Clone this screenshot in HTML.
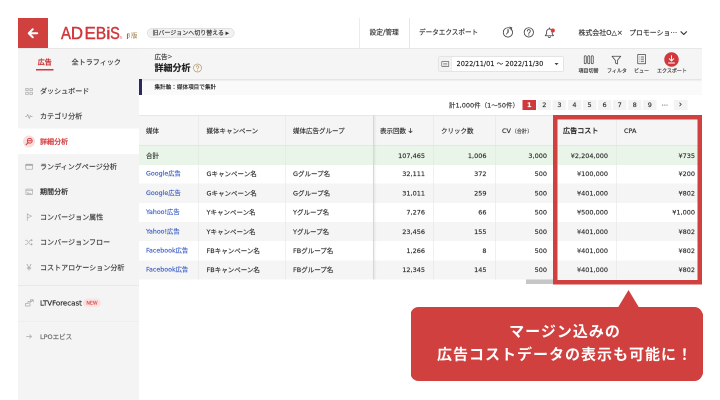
<!DOCTYPE html>
<html lang="ja">
<head>
<meta charset="utf-8">
<title>AD EBiS 詳細分析</title>
<style>
html,body{margin:0;padding:0;background:#fff;}
body{width:720px;height:400px;overflow:hidden;position:relative;}
#w{position:absolute;left:0;top:0;width:1440px;height:800px;transform:scale(.5);transform-origin:0 0;
  font-family:"DejaVu Sans","Noto Sans CJK JP",sans-serif;color:#333;font-size:13px;line-height:1;overflow:hidden;will-change:transform;-webkit-text-stroke:.3px;}
#w *{box-sizing:border-box;}
.abs{position:absolute;}
.t{position:absolute;white-space:nowrap;transform:translateY(-50%);}
/* header */
#hdr{left:36px;top:36px;width:1368px;height:61.5px;background:#fff;border-bottom:2px solid #dadada;}
#back{left:36px;top:36px;width:60px;height:60px;background:#d0403f;}
#pill{left:294px;top:56px;width:175px;height:20px;border:1px solid #cfcfcf;border-radius:10px;background:#f1f1f1;font-size:12px;color:#333;text-align:center;line-height:18px;white-space:nowrap;}
/* sidebar */
#side{left:36px;top:97px;width:242px;height:703px;background:#f4f4f4;}
.si{position:absolute;left:80px;font-size:14.1px;color:#3c3c3c;white-space:nowrap;transform:translateY(-50%);}
/* sub header */
#sub{left:278px;top:97px;width:1126px;height:61px;background:#f5f5f5;box-shadow:0 2px 4px rgba(0,0,0,.12);clip-path:inset(0 0 -12px 0);}
#agg{left:278px;top:158px;width:1126px;height:32px;background:#fafafa;}
#aggbar{left:278px;top:158px;width:6px;height:32px;background:#2b2a60;}
/* table */
.row{position:absolute;left:278px;width:1126px;}
.vb{position:absolute;top:231px;height:328px;width:1px;background:#e2e2e2;}
.c{position:absolute;white-space:nowrap;transform:translateY(-50%);font-size:13px;color:#2e2e2e;}
.r{text-align:right;}
.lnk{color:#3a5dc4;font-size:12.6px;}
.pg{position:absolute;top:200px;width:27px;height:20px;background:#f3f3f3;font-size:13px;text-align:center;line-height:20px;color:#333;margin-left:-.5px;}
</style>
</head>
<body>
<div id="w">
  <!-- header -->
  <div id="hdr" class="abs"></div>
  <div id="back" class="abs">
    <svg width="60" height="59" viewBox="0 0 60 59"><path d="M38.500 30.500H22M29.500 22.500L21.500 30.500L29.500 38.500" fill="none" stroke="#fff" stroke-width="4" stroke-linecap="round" stroke-linejoin="round"/></svg>
  </div>
  <svg class="abs" style="left:110px;top:40px" width="180" height="50" viewBox="55 20 90 25">
    <g font-family="Liberation Sans, sans-serif" font-size="17.4" fill="#d0383c" stroke="#d0383c" stroke-width=".45">
      <text transform="translate(61.05,38.8) scale(.86,1)">A</text>
      <text transform="translate(70.87,38.8) scale(.966,1)">D</text>
      <text transform="translate(84.5,38.8) scale(.972,1)">E</text>
      <text transform="translate(95.74,38.8) scale(.9,1)">B</text>
      <text transform="translate(106.08,38.8) scale(1.15,.965)">i</text>
      <text transform="translate(110.1,38.8) scale(.835,1)">S</text>
      <text x="119.6" y="38.8" font-size="3.6" stroke="none">®</text>
    </g>
  </svg>
  <div class="t" style="left:253px;top:70.5px;font-size:12.6px;-webkit-text-stroke:0;color:#94733f;font-family:'Liberation Sans','Noto Sans CJK JP',sans-serif;"><span style="margin-right:2px">β</span>版</div>
  <div id="pill" class="abs">旧バージョンへ切り替える<span style="font-size:9.5px;margin-left:3px;position:relative;top:-1px;-webkit-text-stroke:0">▶</span></div>

  <div class="t" style="left:739px;top:65px;font-size:13.5px;color:#333;">設定/管理</div>
  <div class="abs" style="left:718px;top:36px;width:1.5px;height:60px;background:#ececec;"></div>
  <div class="abs" style="left:818px;top:36px;width:1.5px;height:60px;background:#e6e6e6;"></div>
  <div class="t" style="left:838px;top:65px;font-size:13.2px;color:#333;">データエクスポート</div>
  <!-- header icons -->
  <svg class="abs" style="left:1000px;top:50px" width="120" height="30" viewBox="0 0 120 30">
    <g fill="none" stroke="#444" stroke-width="1.700" stroke-linecap="round" stroke-linejoin="round">
      <circle cx="15.800" cy="14.800" r="9.300"/><path d="M15.800 9V14.800L12.800 18.200"/><path d="M19.500 4.200L23.600 5.600L22 9.800"/>
      <circle cx="57.600" cy="14.800" r="9.300"/>
      <path d="M54.600 12.200a3 3 0 1 1 4.600 2.500c-1.100.700-1.600 1.300-1.600 2.500"/>
      <path d="M90.500 21.500L93.200 17.500V13.500a5.600 5.600 0 0 1 11.200 0V17.500L107.100 21.500Z"/>
      <path d="M98.800 7.700V5.600"/>
      <path d="M96.500 23.500a2.400 2.400 0 0 0 4.600 0"/>
    </g>
    <circle cx="57.600" cy="20" r="1.200" fill="#444"/>
    <circle cx="105.600" cy="11" r="4.100" fill="#e03a3a"/>
  </svg>
  <div class="t" style="left:1157px;top:65px;font-size:13.8px;color:#333;">株式会社O△×<span style="display:inline-block;width:13px"></span>プロモーショ<span style="font-family:'Noto Sans CJK JP',sans-serif">…</span></div>
  <svg class="abs" style="left:1358px;top:59px" width="18" height="14" viewBox="0 0 18 14"><path d="M4 4.500L9.500 10L15 4.500" fill="none" stroke="#333" stroke-width="2.300" stroke-linecap="round" stroke-linejoin="round"/></svg>

  <!-- sidebar -->
  <div id="side" class="abs"></div>
  <div class="t" style="left:75.5px;top:124px;font-size:14px;color:#d0383c;font-weight:bold;">広告</div>
  <div class="abs" style="left:72px;top:137.5px;width:34.5px;height:3px;background:#d0383c;"></div>
  <div class="t" style="left:143px;top:124px;font-size:14.2px;color:#3a3a3a;">全トラフィック</div>

  <div class="abs" style="left:36px;top:257px;width:242px;height:51px;background:#fff;"></div>
  <div class="si" style="top:182px;">ダッシュボード</div>
  <div class="si" style="top:232px;">カテゴリ分析</div>
  <div class="si" style="top:283px;color:#d0383c;font-weight:500;">詳細分析</div>
  <div class="si" style="top:333px;">ランディングページ分析</div>
  <div class="si" style="top:383px;font-weight:500;color:#333;">期間分析</div>
  <div class="si" style="top:434px;">コンバージョン属性</div>
  <div class="si" style="top:484px;">コンバージョンフロー</div>
  <div class="si" style="top:535px;">コストアロケーション分析</div>
  <div class="abs" style="left:36px;top:570px;width:242px;height:1px;background:#dedede;"></div>
  <div class="si" style="top:606px;color:#222;font-weight:500;">LTVForecast</div>
  <div class="abs" style="left:166px;top:597px;width:36px;height:17px;border-radius:9px;background:#fbe2e2;color:#d84a4a;font-size:9.5px;text-align:center;line-height:17px;">NEW</div>
  <div class="abs" style="left:36px;top:642px;width:242px;height:1px;background:#e8e8e8;"></div>
  <div class="si" style="top:673px;font-size:13px;color:#666;">LPOエビス</div>
  <!-- sidebar icons -->
  <svg class="abs" style="left:36px;top:160px" width="44" height="540" viewBox="0 0 44 540">
    <g fill="none" stroke="#aaa" stroke-width="1.500" stroke-linecap="round" stroke-linejoin="round">
      <!-- dashboard 4 squares, center y=22 -->
      <rect x="15.500" y="17" width="5" height="4.300"/><rect x="23.800" y="17" width="5" height="4.300"/>
      <rect x="15.500" y="24.500" width="5" height="4.300"/><rect x="23.800" y="24.500" width="5" height="4.300"/>
      <!-- category pulse, center y=72 -->
      <path d="M15 73h2.500l2-4.500 3 8.500 2.200-6 1.300 2h2.500"/>
      <!-- landing page, center y=173 -->
      <rect x="15.500" y="168.500" width="13.500" height="10" rx=".8"/><path d="M15.500 170.300h13.500" stroke-width="2.400"/>
      <!-- period calendar, center y=223 -->
      <g transform="translate(22.300 223.500) scale(.88) translate(-22.500 -223)"><rect x="15" y="217" width="15" height="12" rx="1"/><path d="M15 220.500h15M18 224h3M18 226.500h9"/></g>
      <!-- flag, center y=274 -->
      <g transform="translate(22 274) scale(.88) translate(-22 -274)"><path d="M18 266v16M18 267.500l10 4.500-10 4.500"/></g>
      <!-- shuffle, center y=324 -->
      <g transform="translate(21.500 324.500) scale(.86) translate(-22.200 -324.300)"><path d="M14 319.500h3.500l8 9.500H30M14 329h3.500l2.500-3M23.500 322.500l2-3H30M28 317.500l2.500 2-2.500 2M28 327l2.500 2-2.500 2"/></g>
      <!-- ltv, center y=446 -->
      <path d="M15 452v-5h5v-4h5v-3.500h5M15 452h9v-4"/><path d="M22 447l8-6.500M26 440h4.500v4"/>
      <!-- arrow, center y=513 -->
      <path d="M17 513h10M23.500 509.500l3.500 3.500-3.500 3.500"/>
    </g>
    <!-- yen -->
    <text x="22" y="381" font-family="Liberation Sans, sans-serif" font-size="18" fill="#aaa" text-anchor="middle">¥</text>
    <!-- active icon -->
    <circle cx="22" cy="123" r="12" fill="#f9dede"/>
    <g fill="none" stroke="#d0383c" stroke-width="1.900" stroke-linecap="round">
      <circle cx="23.500" cy="121.500" r="4.800"/><path d="M20 125.500l-4 4M21 121.500h5"/>
    </g>
  </svg>

  <!-- sub header -->
  <div id="agg" class="abs"></div>
  <div id="aggbar" class="abs"></div>
  <div class="t" style="left:309px;top:175px;font-size:11.2px;color:#222;">集計軸：媒体項目で集計</div>
  <div id="sub" class="abs"></div>
  <div class="t" style="left:309px;top:113px;font-size:13px;color:#333;">広告<span style="font-size:15.5px;font-family:'Liberation Sans',sans-serif;-webkit-text-stroke:0">&gt;</span></div>
  <div class="t" style="left:309px;top:136px;font-size:18px;font-weight:bold;color:#222;">詳細分析</div>
  <svg class="abs" style="left:385px;top:126px" width="20" height="20" viewBox="0 0 20 20">
    <circle cx="10" cy="10" r="8" fill="none" stroke="#b8996a" stroke-width="1.400"/>
    <path d="M7.600 8a2.500 2.500 0 1 1 3.700 2.200c-.9.500-1.300 1-1.300 1.900" fill="none" stroke="#b8996a" stroke-width="1.400" stroke-linecap="round"/>
    <circle cx="10" cy="14.400" r=".9" fill="#b8996a"/>
  </svg>
  <!-- date -->
  <div class="abs" style="left:877px;top:113px;width:250px;height:30px;background:#fff;border:1px solid #d4d4d4;border-radius:2px;"></div>
  <div class="abs" style="left:878px;top:114px;width:25px;height:28px;background:#f3f3f3;border-right:1px solid #dcdcdc;"></div>
  <svg class="abs" style="left:882px;top:121px" width="18" height="14" viewBox="0 0 18 14"><rect x="1.500" y="1.700" width="14" height="10.600" rx="1.500" fill="none" stroke="#666" stroke-width="1.400"/><path d="M4.500 6h8M4.500 8.800h8" stroke="#999" stroke-width="1.600"/></svg>
  <div class="t" style="left:913px;top:128px;font-size:13.2px;color:#222;">2022/11/01 ～ 2022/11/30</div>
  <svg class="abs" style="left:1109px;top:126px" width="8" height="5" viewBox="0 0 8 5"><path d="M0 0h8L4 4.500z" fill="#444"/></svg>
  <!-- tool icons -->
  <svg class="abs" style="left:1150px;top:104px" width="240" height="30" viewBox="0 0 240 30">
    <g fill="none" stroke="#444" stroke-width="1.500" stroke-linejoin="round">
      <rect x="18.500" y="7.500" width="4" height="16" rx="2"/><rect x="25.500" y="7.500" width="4" height="16" rx="2"/><rect x="32.500" y="7.500" width="4" height="16" rx="2"/>
      <path d="M74 8.500h17.500l-6.700 8.200v7.300l-4.100-2.200v-5.100z"/>
      <rect x="125.500" y="5" width="15.500" height="18.500" rx=".5"/><path d="M128.500 10h1M131.500 10h6.500M128.500 14.300h1M131.500 14.300h6.500M128.500 18.600h1M131.500 18.600h6.500"/>
    </g>
    <circle cx="193" cy="15" r="14.500" fill="#d0383c"/>
    <path d="M193 7.500v10M188.500 13.500l4.500 4.500 4.500-4.500M187 22h12" fill="none" stroke="#fff" stroke-width="2" stroke-linecap="round" stroke-linejoin="round"/>
  </svg>
  <div class="t" style="left:1157px;top:142px;font-size:10px;color:#333;">項目切替</div>
  <div class="t" style="left:1214px;top:142px;font-size:10px;color:#333;">フィルタ</div>
  <div class="t" style="left:1268px;top:142px;font-size:10px;color:#333;">ビュー</div>
  <div class="t" style="left:1314px;top:142px;font-size:10px;color:#333;">エクスポート</div>

  <!-- pagination -->
  <div class="t" style="left:898px;top:210px;font-size:13px;color:#333;">計1,000件（1～50件）</div>
  <div class="pg" style="left:1045.5px;background:#d0383c;color:#fff;font-weight:bold;">1</div>
  <div class="pg" style="left:1075.7px;">2</div>
  <div class="pg" style="left:1105.8px;">3</div>
  <div class="pg" style="left:1136.0px;">4</div>
  <div class="pg" style="left:1166.1px;">5</div>
  <div class="pg" style="left:1196.2px;">6</div>
  <div class="pg" style="left:1226.4px;">7</div>
  <div class="pg" style="left:1256.5px;">8</div>
  <div class="pg" style="left:1286.7px;">9</div>
  <div class="pg" style="left:1316.8px;background:none;font-family:'Noto Sans CJK JP',sans-serif">…</div>
  <div class="pg" style="left:1348.0px;font-size:17px;line-height:17px;">›</div>

  <!-- table -->
  <div class="row" style="top:229.5px;height:61.5px;background:#f5f5f5;border-top:1px solid #dcdcdc;border-bottom:1px solid #dcdcdc;"></div>
  <div class="row" style="top:291px;height:38.5px;background:#e8f5e8;"></div>
  <div class="row" style="top:329.5px;height:37.8px;background:#fff;"></div>
  <div class="row" style="top:367.3px;height:38.3px;background:#f5f5f5;"></div>
  <div class="row" style="top:405.6px;height:38.4px;background:#fff;"></div>
  <div class="row" style="top:444px;height:38.3px;background:#f5f5f5;"></div>
  <div class="row" style="top:482.3px;height:38.3px;background:#fff;"></div>
  <div class="row" style="top:520.6px;height:38.4px;background:#f5f5f5;"></div>
  <div class="vb" style="left:397px;"></div>
  <div class="vb" style="left:571px;"></div>
  <div class="vb" style="left:746px;width:2px;background:#d8d8d8;box-shadow:2px 0 3px rgba(0,0,0,.10);"></div>
  <div class="vb" style="left:866px;"></div>
  <div class="vb" style="left:990px;"></div>
  <div class="vb" style="left:1232px;"></div>

  <!-- header cells -->
  <div class="c" style="left:292px;top:261px;">媒体</div>
  <div class="c" style="left:413px;top:261px;">媒体キャンペーン</div>
  <div class="c" style="left:586px;top:261px;">媒体広告グループ</div>
  <div class="c" style="left:760px;top:261px;">表示回数<svg width="10" height="11" viewBox="0 0 10 11" style="margin-left:4px;vertical-align:-1px"><path d="M5 .8v9M1.300 6.300L5 10l3.700-3.700" fill="none" stroke="#333" stroke-width="1.500"/></svg></div>
  <div class="c" style="left:882px;top:261px;">クリック数</div>
  <div class="c" style="left:1004px;top:261px;">CV<span style="font-size:10.5px;color:#444;margin-left:1px;font-family:'Noto Sans CJK JP',sans-serif">（合計）</span></div>
  <div class="c" style="left:1126px;top:261px;font-weight:500;font-size:14.2px;color:#222;">広告コスト</div>
  <div class="c" style="left:1248px;top:261px;">CPA</div>

  <!-- total -->
  <div class="c" style="left:292px;top:310.5px;">合計</div>
  <div class="c r" style="right:590px;top:310.5px;">107,465</div>
  <div class="c r" style="right:467px;top:310.5px;">1,006</div>
  <div class="c r" style="right:346px;top:310.5px;">3,000</div>
  <div class="c r" style="right:224px;top:310.5px;">¥2,204,000</div>
  <div class="c r" style="right:50px;top:310.5px;">¥735</div>

  <!-- row 1 -->
  <div class="c lnk" style="left:292px;top:347.3px;">Google広告</div>
  <div class="c" style="left:413px;top:347.3px;">Gキャンペーン名</div>
  <div class="c" style="left:586px;top:347.3px;">Gグループ名</div>
  <div class="c r" style="right:590px;top:347.3px;">32,111</div>
  <div class="c r" style="right:467px;top:347.3px;">372</div>
  <div class="c r" style="right:346px;top:347.3px;">500</div>
  <div class="c r" style="right:224px;top:347.3px;">¥100,000</div>
  <div class="c r" style="right:50px;top:347.3px;">¥200</div>
  <!-- row 2 -->
  <div class="c lnk" style="left:292px;top:385.7px;">Google広告</div>
  <div class="c" style="left:413px;top:385.7px;">Gキャンペーン名</div>
  <div class="c" style="left:586px;top:385.7px;">Gグループ名</div>
  <div class="c r" style="right:590px;top:385.7px;">31,011</div>
  <div class="c r" style="right:467px;top:385.7px;">259</div>
  <div class="c r" style="right:346px;top:385.7px;">500</div>
  <div class="c r" style="right:224px;top:385.7px;">¥401,000</div>
  <div class="c r" style="right:50px;top:385.7px;">¥802</div>
  <!-- row 3 -->
  <div class="c lnk" style="left:292px;top:424px;">Yahoo!広告</div>
  <div class="c" style="left:413px;top:424px;">Yキャンペーン名</div>
  <div class="c" style="left:586px;top:424px;">Yグループ名</div>
  <div class="c r" style="right:590px;top:424px;">7,276</div>
  <div class="c r" style="right:467px;top:424px;">66</div>
  <div class="c r" style="right:346px;top:424px;">500</div>
  <div class="c r" style="right:224px;top:424px;">¥500,000</div>
  <div class="c r" style="right:50px;top:424px;">¥1,000</div>
  <!-- row 4 -->
  <div class="c lnk" style="left:292px;top:462.5px;">Yahoo!広告</div>
  <div class="c" style="left:413px;top:462.5px;">Yキャンペーン名</div>
  <div class="c" style="left:586px;top:462.5px;">Yグループ名</div>
  <div class="c r" style="right:590px;top:462.5px;">23,456</div>
  <div class="c r" style="right:467px;top:462.5px;">155</div>
  <div class="c r" style="right:346px;top:462.5px;">500</div>
  <div class="c r" style="right:224px;top:462.5px;">¥401,000</div>
  <div class="c r" style="right:50px;top:462.5px;">¥802</div>
  <!-- row 5 -->
  <div class="c lnk" style="left:292px;top:501px;">Facebook広告</div>
  <div class="c" style="left:413px;top:501px;">FBキャンペーン名</div>
  <div class="c" style="left:586px;top:501px;">FBグループ名</div>
  <div class="c r" style="right:590px;top:501px;">1,266</div>
  <div class="c r" style="right:467px;top:501px;">8</div>
  <div class="c r" style="right:346px;top:501px;">500</div>
  <div class="c r" style="right:224px;top:501px;">¥401,000</div>
  <div class="c r" style="right:50px;top:501px;">¥802</div>
  <!-- row 6 -->
  <div class="c lnk" style="left:292px;top:539.2px;">Facebook広告</div>
  <div class="c" style="left:413px;top:539.2px;">FBキャンペーン名</div>
  <div class="c" style="left:586px;top:539.2px;">FBグループ名</div>
  <div class="c r" style="right:590px;top:539.2px;">12,345</div>
  <div class="c r" style="right:467px;top:539.2px;">145</div>
  <div class="c r" style="right:346px;top:539.2px;">500</div>
  <div class="c r" style="right:224px;top:539.2px;">¥401,000</div>
  <div class="c r" style="right:50px;top:539.2px;">¥802</div>

  <!-- scrollbar -->
  <div class="abs" style="left:1052px;top:559px;width:56px;height:8.5px;background:#c6c6c6;"></div>
  <!-- red highlight box -->
  <div class="abs" style="left:1106px;top:229.5px;width:298.4px;height:339.7px;border:9.7px solid #d0403f;"></div>
  <!-- callout -->
  <svg class="abs" style="left:800px;top:570px" width="620" height="210" viewBox="0 0 620 210">
    <path d="M457 10L478 45H436z" fill="#d0403f"/>
    <rect x="21" y="44" width="584" height="148" rx="16" fill="#d0403f"/>
    <text x="330" y="103" text-anchor="middle" font-family="Liberation Sans, Noto Sans CJK JP, sans-serif" font-weight="bold" font-size="30" letter-spacing="2" fill="#fff">マージン込みの</text>
    <text x="330" y="149" text-anchor="middle" font-family="Liberation Sans, Noto Sans CJK JP, sans-serif" font-weight="bold" font-size="30" letter-spacing="2" fill="#fff">広告コストデータの表示も可能に！</text>
  </svg>
</div>
</body>
</html>
